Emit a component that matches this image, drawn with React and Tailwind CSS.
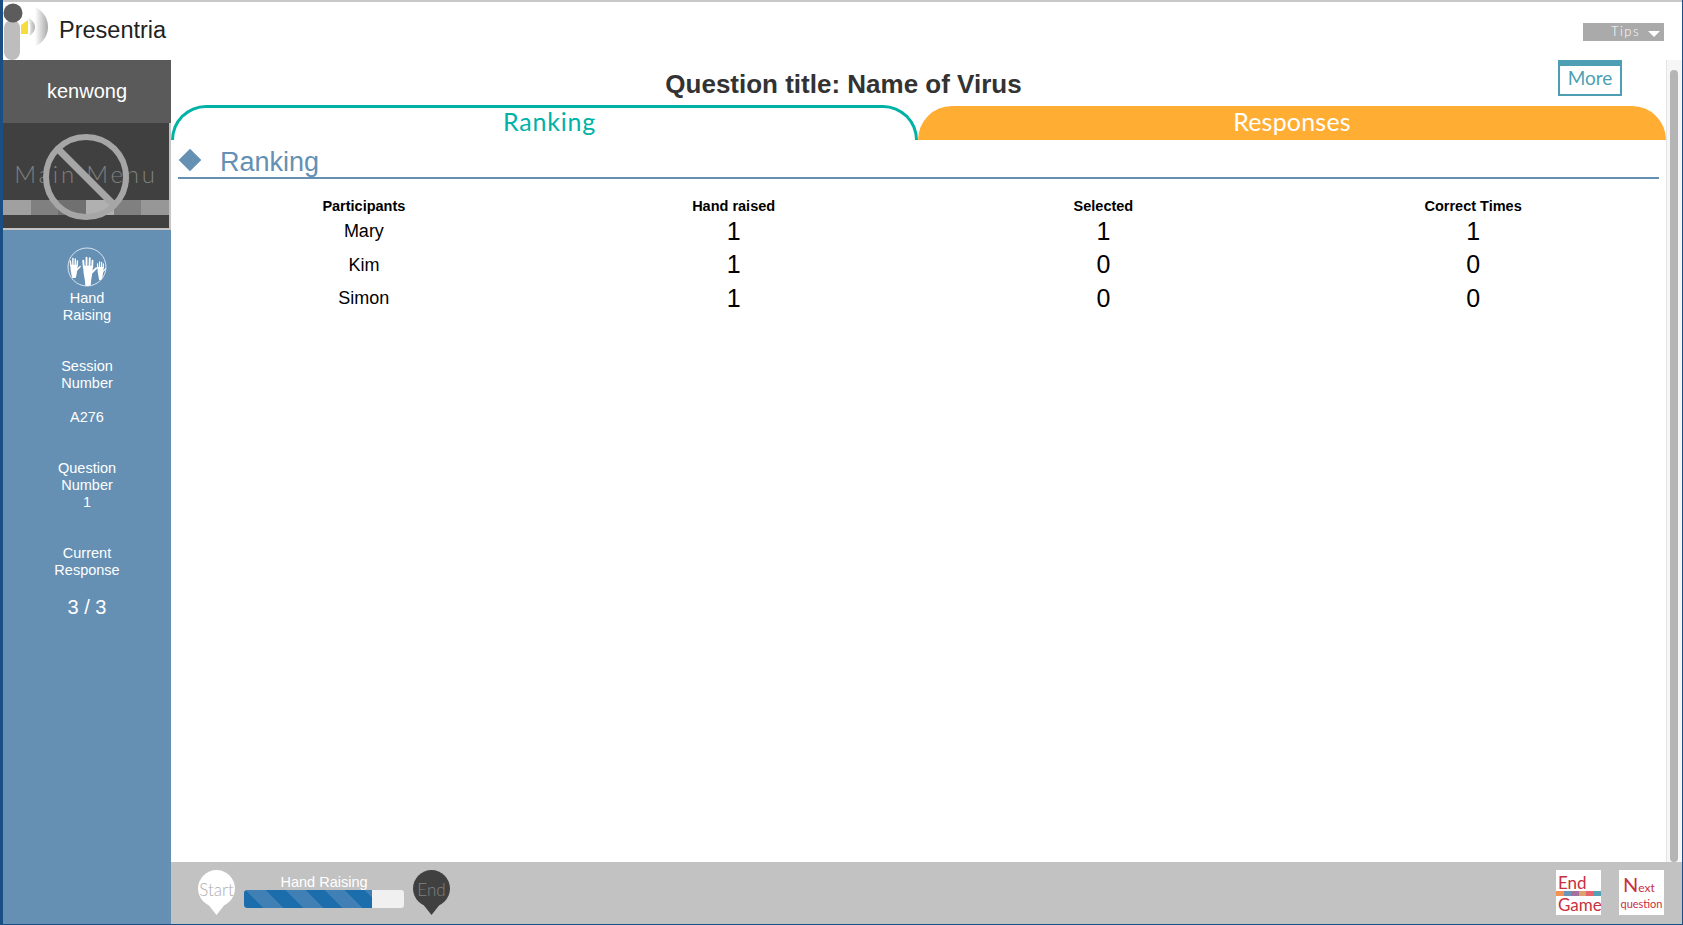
const sans = "font-['Liberation_Sans',Arial,sans-serif]";
const soft = "font-['Lato','Open_Sans',sans-serif]";

const rows = [
    {name: 'Mary', raised: 1, selected: 1, correct: 1},
    {name: 'Kim', raised: 1, selected: 0, correct: 0},
    {name: 'Simon', raised: 1, selected: 0, correct: 0},
];

function Logo() {
    return (
        <svg width="47" height="57" viewBox="0 0 47 57" className="shrink-0">
            <defs>
                <linearGradient id="logoFade" x1="0" x2="1" y1="0" y2="0">
                    <stop offset="0" stopColor="#ffffff" />
                    <stop offset="0.5" stopColor="#ffffff" />
                    <stop offset="1" stopColor="#a8a8a8" />
                </linearGradient>
                <linearGradient id="logoInner" x1="0" x2="1" y1="0" y2="0">
                    <stop offset="0" stopColor="#ffffff" />
                    <stop offset="1" stopColor="#b0b0b0" />
                </linearGradient>
            </defs>
            <path d="M19 1 C35 1 45 12 45 24 C45 36 35 46 19 46 Z" fill="url(#logoFade)" />
            <path d="M24 14 C30 17 32 21 32 24 C32 27 30 31 26 33 C28 27 28 20 24 14 Z" fill="url(#logoInner)" />
            <path d="M18 22 L25 17 L25 31 L18 31 Z" fill="#f6dc3c" />
            <rect x="1" y="17" width="16" height="40" rx="8" fill="#bdbdbd" />
            <circle cx="10" cy="10" r="9.5" fill="#5c5c5c" />
        </svg>
    );
}

function NoEntry() {
    return (
        <svg width="90" height="90" viewBox="0 0 90 90" className="absolute left-[38px] top-[9px]">
            <circle cx="45" cy="45" r="40" fill="none" stroke="#a6a6a6" strokeWidth="6" />
            <path d="M17 17 L73 73" stroke="#a6a6a6" strokeWidth="7" />
        </svg>
    );
}

function Hand({x, y, scale, arm}) {
    return (
        <g transform={`translate(${x} ${y}) scale(${scale})`} stroke="#ffffff" strokeLinecap="round" fill="#ffffff">
            <path d={`M-4 -3 L4 -3 L3.5 3 L2.6 8 L1.8 ${arm} L-1.8 ${arm} L-2.6 8 L-3.5 3 Z`} stroke="none" />
            <path d="M-3.4 -2 L-3.8 -7 M-1.2 -3 L-1.2 -9.5 M1.2 -3 L1.4 -9 M3.4 -2 L3.6 -7 M3.5 2 L6.5 -1" strokeWidth="1.5" fill="none" />
        </g>
    );
}

function Hands() {
    return (
        <svg width="42" height="42" viewBox="0 0 42 42" className="overflow-hidden">
            <defs>
                <clipPath id="handClip">
                    <circle cx="21" cy="21" r="19" />
                </clipPath>
            </defs>
            <circle cx="21" cy="21" r="19" fill="none" stroke="#dbe6ee" strokeWidth="1" />
            <g clipPath="url(#handClip)">
                <Hand x={8} y={21.5} scale={0.95} arm={11} />
                <Hand x={22} y={23.5} scale={1.25} arm={16} />
                <Hand x={34.5} y={23.5} scale={0.8} arm={13} />
            </g>
        </svg>
    );
}

function Pin({fill, color, children}) {
    return (
        <div className="relative w-[37px] h-[46px] shrink-0">
            <svg width="37" height="46" viewBox="0 0 37 46" className="absolute inset-0">
                <circle cx="18.5" cy="18.5" r="18.5" fill={fill} />
                <path d="M9 33 L18.5 45 L28 33 Z" fill={fill} />
            </svg>
            <span className={`${soft} absolute inset-x-0 top-[10px] text-center text-[17px] font-light leading-[20px] ${color}`}>
                {children}
            </span>
        </div>
    );
}

function Sidebar() {
    return (
        <aside className={`${sans} w-[168px] shrink-0 flex flex-col`}>
            <div className="h-[63px] pb-[2px] bg-[#5a5a5a] flex items-center justify-center text-white text-[20px]">
                kenwong
            </div>
            <div className="relative h-[107px] bg-[#404040] border-r-2 border-b-2 border-[#c4c4c4] flex flex-col">
                <div className={`${soft} pt-[37px] text-center text-[#7f7f7f] text-[24px] font-light leading-[28px] tracking-[2.8px]`}>
                    Main Menu
                </div>
                <div className="mt-[12px] grid grid-cols-6 h-[15px]">
                    <div className="bg-[#a0a0a0]" />
                    <div className="bg-[#808080]" />
                    <div className="bg-[#707070]" />
                    <div className="bg-[#b0b0b0]" />
                    <div className="bg-[#808080]" />
                    <div className="bg-[#979797]" />
                </div>
                <NoEntry />
            </div>
            <div className="flex-1 bg-[#6590b3] flex flex-col items-center text-white text-[14.5px] leading-[17px] text-center">
                <div className="mt-[16px] h-[42px]"><Hands /></div>
                <div className="mt-[2px]">Hand<br />Raising</div>
                <div className="mt-[34px]">Session<br />Number</div>
                <div className="mt-[17px]">A276</div>
                <div className="mt-[34px]">Question<br />Number<br />1</div>
                <div className="mt-[34px]">Current<br />Response</div>
                <div className="mt-[16px] text-[20px] leading-[24px]">3 / 3</div>
            </div>
        </aside>
    );
}

function Tabs() {
    return (
        <div className={`${soft} flex h-[35px] text-[25px]`}>
            <div className="w-[747px] pl-[10px] border-t-[3px] border-x-[3px] border-[#00b2a6] rounded-t-[40px] text-[#00b2a6] text-center leading-[27px] tracking-[0.8px]">
                Ranking
            </div>
            <div className="flex-1 mt-px bg-[#ffae33] rounded-t-[34px] text-white text-center leading-[31px] tracking-[0.2px]">
                Responses
            </div>
        </div>
    );
}

function RankingTable() {
    return (
        <div className="mx-[8px] mt-[18px] text-black">
            <div className="grid grid-cols-4 text-center text-[14.5px] font-bold leading-[18px]">
                <div>Participants</div>
                <div>Hand raised</div>
                <div>Selected</div>
                <div>Correct Times</div>
            </div>
            <div className="-mt-[2px]">
                {rows.map(row => (
                    <div key={row.name} className="grid grid-cols-4 h-[33.3px] items-center text-center text-[25px]">
                        <div className="text-[18px]">{row.name}</div>
                        <div>{row.raised}</div>
                        <div>{row.selected}</div>
                        <div>{row.correct}</div>
                    </div>
                ))}
            </div>
        </div>
    );
}

function Content() {
    return (
        <main className={`${sans} relative flex-1 flex flex-col min-w-0`}>
            <h1 className="h-[45px] pt-[8px] pr-[150px] text-center text-[#333333] text-[26px] font-bold leading-[32px]">
                Question title: Name of Virus
            </h1>
            <Tabs />
            <div className="mx-[7px] mt-[2px] h-[37px] pt-[4px] border-b-2 border-[#6590b3] flex items-center text-[#6590b3]">
                <div className="w-[16px] h-[16px] ml-[4px] -mt-[3px] rotate-45 bg-[#6590b3]" />
                <span className="ml-[22px] text-[27px] leading-[32px]">Ranking</span>
            </div>
            <RankingTable />
            <button className={`${soft} absolute left-[1387px] top-[0px] w-[64px] h-[36px] pb-[4px] bg-white border-2 border-t-[6px] border-[#4e9fb3] text-[#4e9fb3] text-[19px] leading-[22px]`}>
                More
            </button>
        </main>
    );
}

function BottomBar() {
    return (
        <div className={`${sans} h-[62px] bg-[#c2c2c2] flex items-start pl-[27px] pr-[18px] pt-[8px]`}>
            <Pin fill="#ffffff" color="text-[#adadad]">Start</Pin>
            <div className="ml-[9px] w-[160px] pt-[3px]">
                <div className="text-white text-[14.5px] leading-[18px] text-center">Hand Raising</div>
                <div className="-mt-px h-[18px] bg-[#f0f0f0] rounded-[3px] overflow-hidden">
                    <div className="h-full w-[128px] bg-[repeating-linear-gradient(45deg,#1c6dab_0px,#1c6dab_14px,#4080b4_14px,#4080b4_28px)]" />
                </div>
            </div>
            <div className="ml-[9px]">
                <Pin fill="#404040" color="text-[#808080]">End</Pin>
            </div>
            <div className="ml-auto flex gap-[18px]">
                <div className={`${soft} w-[45px] h-[45px] bg-white text-[#c9303e] text-[17px]`}>
                    <div className="h-[21px] pl-[2px] leading-[26px]">End</div>
                    <div className="h-[5px] grid grid-cols-6">
                        <div className="bg-[#f79256]" />
                        <div className="bg-[#6a97b8]" />
                        <div className="bg-[#a56fa0]" />
                        <div className="bg-[#dca16e]" />
                        <div className="bg-[#e8636e]" />
                        <div className="bg-[#53a0b7]" />
                    </div>
                    <div className="pl-[2px] leading-[17px]">Game</div>
                </div>
                <div className={`${soft} w-[45px] h-[45px] bg-white text-[#c9303e]`}>
                    <div className="pl-[4px] pt-[5px] text-[12px] leading-[19px]"><span className="text-[20px]">N</span>ext</div>
                    <div className="text-[11px] leading-[13px] text-center">question</div>
                </div>
            </div>
        </div>
    );
}

export default function App() {
    return (
        <div className="w-[1683px] h-[925px] overflow-hidden bg-white flex flex-col border-l-[3px] border-r border-b border-[#1a4f86] relative">
            <div className="h-[3px] shrink-0 border-t-2 border-[#c8c8c8] box-content -mb-[2px]" />
            <header className="h-[57px] shrink-0 flex items-center">
                <Logo />
                <span className={`${sans} ml-[9px] -mt-[1px] text-[23.5px] text-[#222222]`}>Presentria</span>
                <div className={`${soft} ml-auto mr-[18px] w-[81px] h-[18px] bg-[#aaaaaa] text-white text-[13px] font-light tracking-[1.5px] flex items-center justify-end gap-[8px] pr-[4px]`}>
                    <span>Tips</span>
                    <span className="mt-[4px] w-0 h-0 border-x-[6px] border-x-transparent border-t-[6px] border-t-white" />
                </div>
            </header>
            <div className="flex-1 flex min-h-0">
                <Sidebar />
                <div className="flex-1 flex flex-col min-w-0">
                    <div className="flex-1 flex min-h-0">
                        <Content />
                        <div className="w-[16px] shrink-0 bg-[#f6f6f6] border-l border-[#e4e4e4] pt-[10px] px-[3px]">
                            <div className="h-full w-[8px] rounded-[4px] bg-[#b5b5b5]" />
                        </div>
                    </div>
                    <BottomBar />
                </div>
            </div>
        </div>
    );
}
